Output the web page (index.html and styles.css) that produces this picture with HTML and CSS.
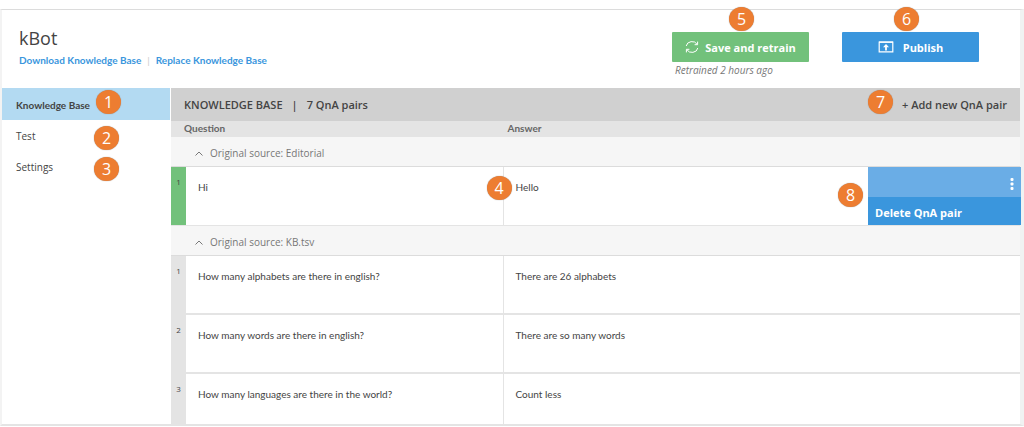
FILE: index.html
```html
<!DOCTYPE html>
<html lang="en">
<head>
<meta charset="utf-8">
<meta name="viewport" content="width=device-width, initial-scale=1">
<title>kBot</title>
<link rel="stylesheet" href="styles.css">
</head>
<body>
<div class="app">
  <header class="header">
    <div class="intro">
      <h1 class="title">kBot</h1>
      <nav class="links" aria-label="Knowledge base files">
        <a href="#download">Download Knowledge Base</a>
        <span class="divider">|</span>
        <a href="#replace">Replace Knowledge Base</a>
      </nav>
    </div>
    <div class="actions">
      <div class="action">
        <span class="badge badge-save">5</span>
        <button class="button button-save" type="button">
          <svg class="icon" width="14" height="14" viewBox="0 0 14 14" fill="none" stroke="currentColor">
            <path d="M1.2 6A5.9 5.4 0 0 1 12.2 4.4M12.8 8A5.9 5.4 0 0 1 1.8 9.6"/>
            <path d="M12.6 1.6v3.1H9.6M1.4 12.4V9.3h3"/>
          </svg>
          <span>Save and retrain</span>
        </button>
        <p class="note">Retrained 2 hours ago</p>
      </div>
      <div class="action">
        <span class="badge badge-publish">6</span>
        <button class="button button-publish" type="button">
          <svg class="icon" width="16" height="12" viewBox="0 0 16 12" fill="none" stroke="currentColor">
            <path d="M5 10.9H1.2V1.1h13.6v9.8H11" stroke-width="1.2"/>
            <path d="M1 1.2h14M5 10.9h6" stroke-width="1.2"/>
            <path d="M8 9.4V5" stroke-width="1.8"/>
            <path d="M5 6.2L8 3l3 3.2z" fill="currentColor" stroke="none"/>
          </svg>
          <span>Publish</span>
        </button>
      </div>
    </div>
  </header>
  <div class="body">
    <nav class="sidebar" aria-label="Sections">
      <a class="tab tab-active" href="#kb">Knowledge Base<span class="badge badge-tab-active">1</span></a>
      <a class="tab" href="#test">Test<span class="badge badge-tab">2</span></a>
      <a class="tab" href="#settings">Settings<span class="badge badge-tab">3</span></a>
    </nav>
    <main class="main">
      <div class="toolbar">
        <h2 class="heading"><span>KNOWLEDGE BASE</span><span>|</span><span>7 QnA pairs</span></h2>
        <button class="add" type="button">+ Add new QnA pair<span class="badge badge-add">7</span></button>
      </div>
      <table class="pairs">
        <colgroup><col class="col-index"><col class="col-question"><col></colgroup>
        <thead>
          <tr><th class="th-question" colspan="2" scope="col">Question</th><th class="th-answer" scope="col">Answer</th></tr>
        </thead>
        <tbody>
          <tr class="group"><th colspan="3" scope="rowgroup"><button class="toggle" type="button"><svg width="8" height="5" viewBox="0 0 8 5" fill="none" stroke="currentColor"><path d="M.5 4.5L4 1l3.5 3.5"/></svg>Original source: Editorial</button></th></tr>
          <tr class="pair pair-new">
            <td class="index">1</td>
            <td class="question">Hi</td>
            <td class="answer">Hello<span class="badge badge-split">4</span>
              <div class="menu">
                <button class="menu-toggle" type="button" aria-label="More options"><svg width="4" height="14" viewBox="0 0 4 14" fill="currentColor"><rect x=".5" y="1" width="3" height="3" rx="1"/><rect x=".5" y="5.5" width="3" height="3" rx="1"/><rect x=".5" y="10" width="3" height="3" rx="1"/></svg></button>
                <button class="menu-item" type="button">Delete QnA pair</button>
                <span class="badge badge-menu">8</span>
              </div>
            </td>
          </tr>
        </tbody>
        <tbody>
          <tr class="group"><th colspan="3" scope="rowgroup"><button class="toggle" type="button"><svg width="8" height="5" viewBox="0 0 8 5" fill="none" stroke="currentColor"><path d="M.5 4.5L4 1l3.5 3.5"/></svg>Original source: KB.tsv</button></th></tr>
          <tr class="pair"><td class="index">1</td><td class="question">How many alphabets are there in english?</td><td class="answer">There are 26 alphabets</td></tr>
          <tr class="pair"><td class="index">2</td><td class="question">How many words are there in english?</td><td class="answer">There are so many words</td></tr>
          <tr class="pair pair-last"><td class="index">3</td><td class="question">How many languages are there in the world?</td><td class="answer">Count less</td></tr>
        </tbody>
      </table>
    </main>
  </div>
</div>
</body>
</html>
```
FILE: styles.css
```css
* { box-sizing: border-box; }
body {
  margin: 0;
  padding-top: 9px;
  background: #fff;
  color: #444;
  font: 10px/14px "Open Sans", "Noto Sans", sans-serif;
}
h1, h2, p { margin: 0; font-weight: 400; }
button { margin: 0; border: 0; padding: 0; background: none; color: inherit; font: inherit; cursor: pointer; }
a { text-decoration: none; color: inherit; }

.app {
  border-top: 1px solid #dcdcdc;
  border-bottom: 2px solid #e4e4e4;
  border-left: 2px solid #f3f3f3;
  border-right: 4px solid #f0f2f2;
}
.header {
  display: flex;
  justify-content: space-between;
  min-height: 78px;
  padding: 16px 41px 0 17px;
}
.title { font-size: 18px; line-height: 24px; }
.links { display: flex; gap: 6px; margin-top: 3px; color: #3a96dd; font-family: Lato, sans-serif; font-weight: 700; }
.divider { color: #ccc; font-weight: 400; }
.actions { display: flex; gap: 33px; padding-top: 6px; }
.action { position: relative; width: 137px; }
.button {
  display: flex;
  align-items: center;
  justify-content: center;
  gap: 6px;
  width: 100%;
  height: 30px;
  padding-top: 2px;
  border-radius: 1px;
  color: #fff;
  font-size: 11px;
  font-weight: 700;
}
.icon { margin-bottom: 2px; }
.button-save { background: #72c17b; }
.button-publish { gap: 9px; background: #3a96dd; }
.note { padding: 1px 3px; color: #777; font-style: italic; }

.badge {
  position: absolute;
  z-index: 1;
  width: 25px;
  height: 24px;
  border-radius: 50%;
  background: #ed7d31;
  box-shadow: 0 0 1px #888;
  color: #fff;
  font-family: "Open Sans", "Noto Sans", sans-serif;
  font-size: 16px;
  font-weight: 400;
  line-height: 24px;
  text-align: center;
}
.badge-save { top: -25px; left: 57px; }
.badge-publish { top: -25px; left: 52px; }
.badge-tab-active { top: 2px; left: 94px; }
.badge-tab { top: 6px; left: 92px; }
.badge-add { top: -8px; right: 114px; }
.badge-split { top: 9px; left: -17px; }
.badge-menu { top: 16px; left: -30px; }

.body { display: grid; grid-template-columns: 168px 1fr; column-gap: 1px; }
.tab { display: block; position: relative; padding: 9px 14px 8px; line-height: 14px; }
.tab-active { padding: 10px 14px 8px; background: #b3daf2; font-family: Lato, sans-serif; font-weight: 700; }
.toolbar {
  display: flex;
  align-items: center;
  justify-content: space-between;
  min-height: 33px;
  padding: 0 13px;
  background: #d0d0d0;
}
.heading { display: flex; gap: 9px; font-size: 11px; font-weight: 600; }
.add { position: relative; font-size: 11px; font-weight: 600; }

.pairs { width: 100%; border-collapse: separate; border-spacing: 0; table-layout: fixed; }
.col-index { width: 15px; }
.col-question { width: 37.4%; }
.pairs th, .pairs td { padding: 0; text-align: left; vertical-align: top; }
.pairs thead th { padding: 0 0 2px; background: #e4e4e4; color: #666; font-family: Lato, sans-serif; font-weight: 700; }
.pairs thead .th-question { padding-left: 13px; }
.pairs thead .th-answer { padding-left: 4px; }
.group th { height: 30px; border-bottom: 1px solid #dcdcdc; background: #f6f6f6; font-weight: 400; }
.toggle { display: flex; align-items: center; gap: 7px; padding: 9px 24px 0; color: #777; }
.pair td { height: 59px; border-bottom: 2px solid #e4e4e4; }
.pair-new td { border-bottom-width: 1px; }
.pair-last td { height: 50px; border-bottom: 0; }
.pair .index { padding-top: 8px; background: #e4e4e4; font-size: 8px; text-align: center; }
.pair-new .index { background: #72c17b; }
.pair .question, .pair .answer { padding: 13px 12px 0; font-family: Lato, sans-serif; }
.pair .question { border-right: 1px solid #e4e4e4; }
.pair .answer { position: relative; }
.menu { position: absolute; top: 0; right: -1px; width: 153px; font-family: "Open Sans", "Noto Sans", sans-serif; }
.menu button { display: flex; align-items: center; width: 100%; color: #fff; }
.menu .menu-toggle { justify-content: flex-end; height: 30px; padding: 4px 7px 0; background: #6aade6; }
.menu .menu-item { height: 28px; padding: 3px 7px 0; background: #3a96dd; font-size: 11px; font-weight: 700; }
```
